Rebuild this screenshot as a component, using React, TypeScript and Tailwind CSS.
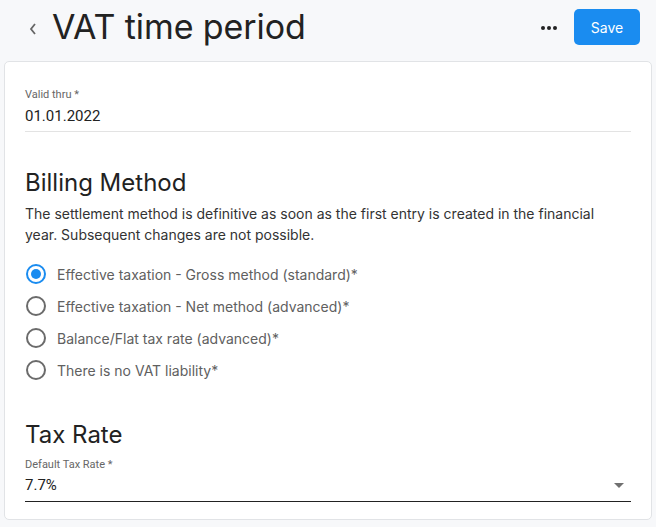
import React, { useState } from 'react';

const OPTIONS = [
  'Effective taxation - Gross method (standard)*',
  'Effective taxation - Net method (advanced)*',
  'Balance/Flat tax rate (advanced)*',
  'There is no VAT liability*',
];

const Radio = ({ checked }: { checked: boolean }) => (
  <span
    className={`flex h-[20px] w-[20px] shrink-0 items-center justify-center rounded-full border-2 ${
      checked ? 'border-[#1a8cf0]' : 'border-[#6b6b6b]'
    }`}
  >
    {checked && <span className="h-[10px] w-[10px] rounded-full bg-[#1a8cf0]" />}
  </span>
);

export default function App() {
  const [method, setMethod] = useState(0);

  return (
    <div className="min-h-[527px] w-[656px] bg-[#f7f8fa] font-['Inter',sans-serif] text-[#222]">
      {/* Header */}
      <div className="flex h-[61px] items-center pb-[7px] pl-[28px] pr-[16px]">
        <svg width="10" height="14" viewBox="0 0 10 14" className="mt-[4px]">
          <path d="M7 2 L3 7 L7 12" fill="none" stroke="#666" strokeWidth="1.8" />
        </svg>
        <h1 className="ml-[14px] text-[34px] leading-none tracking-[-0.1px] text-[#222]">VAT time period</h1>
        <div className="ml-auto flex items-center gap-[17px]">
          <span className="flex gap-[2px] pt-[2px]">
            <span className="h-[4px] w-[4px] rounded-full bg-[#222]" />
            <span className="h-[4px] w-[4px] rounded-full bg-[#222]" />
            <span className="h-[4px] w-[4px] rounded-full bg-[#222]" />
          </span>
          <button className="h-[36px] w-[66px] rounded-[5px] bg-[#1a8cf0] text-[14px] text-white">Save</button>
        </div>
      </div>

      {/* Card */}
      <div className="mx-[4px] h-[459px] rounded-[5px] border border-[#e1e3e6] bg-white px-[20px] pt-[26px]">
        <div className="font-['Roboto',sans-serif]">
          <div className="text-[11px] leading-[13px] text-[#666]">Valid thru *</div>
          <div className="mt-[6px] border-b border-[#e3e3e3] pb-[6px] text-[15px] leading-[18px] text-[#222]">01.01.2022</div>
        </div>

        <h2 className="mt-[36px] text-[24px] leading-[29px] text-[#222]">Billing Method</h2>
        <p className="mt-[6px] pr-[30px] text-[14px] leading-[21px] text-[#333]">
          The settlement method is definitive as soon as the first entry is created in the financial year. Subsequent
          changes are not possible.
        </p>

        <div className="mt-[19px] flex flex-col gap-[12px] pl-[1px]">
          {OPTIONS.map((o, i) => (
            <label key={o} className="flex h-[20px] cursor-pointer items-center gap-[11px]" onClick={() => setMethod(i)}>
              <Radio checked={method === i} />
              <span className="text-[14px] text-[#606060]">{o}</span>
            </label>
          ))}
        </div>

        <h2 className="mt-[40px] text-[24px] leading-[29px] text-[#222]">Tax Rate</h2>
        <div className="mt-[9px] font-['Roboto',sans-serif]">
          <div className="text-[11px] leading-[13px] text-[#666]">Default Tax Rate *</div>
          <div className="mt-[5px] flex items-center border-b border-[#222] pb-[7px] text-[15px] leading-[18px] text-[#222]">
            <span>7.7%</span>
            <svg width="10" height="5" viewBox="0 0 10 5" className="ml-auto mr-[7px]">
              <path d="M0 0 L10 0 L5 5 Z" fill="#707070" />
            </svg>
          </div>
        </div>
      </div>
    </div>
  );
}
